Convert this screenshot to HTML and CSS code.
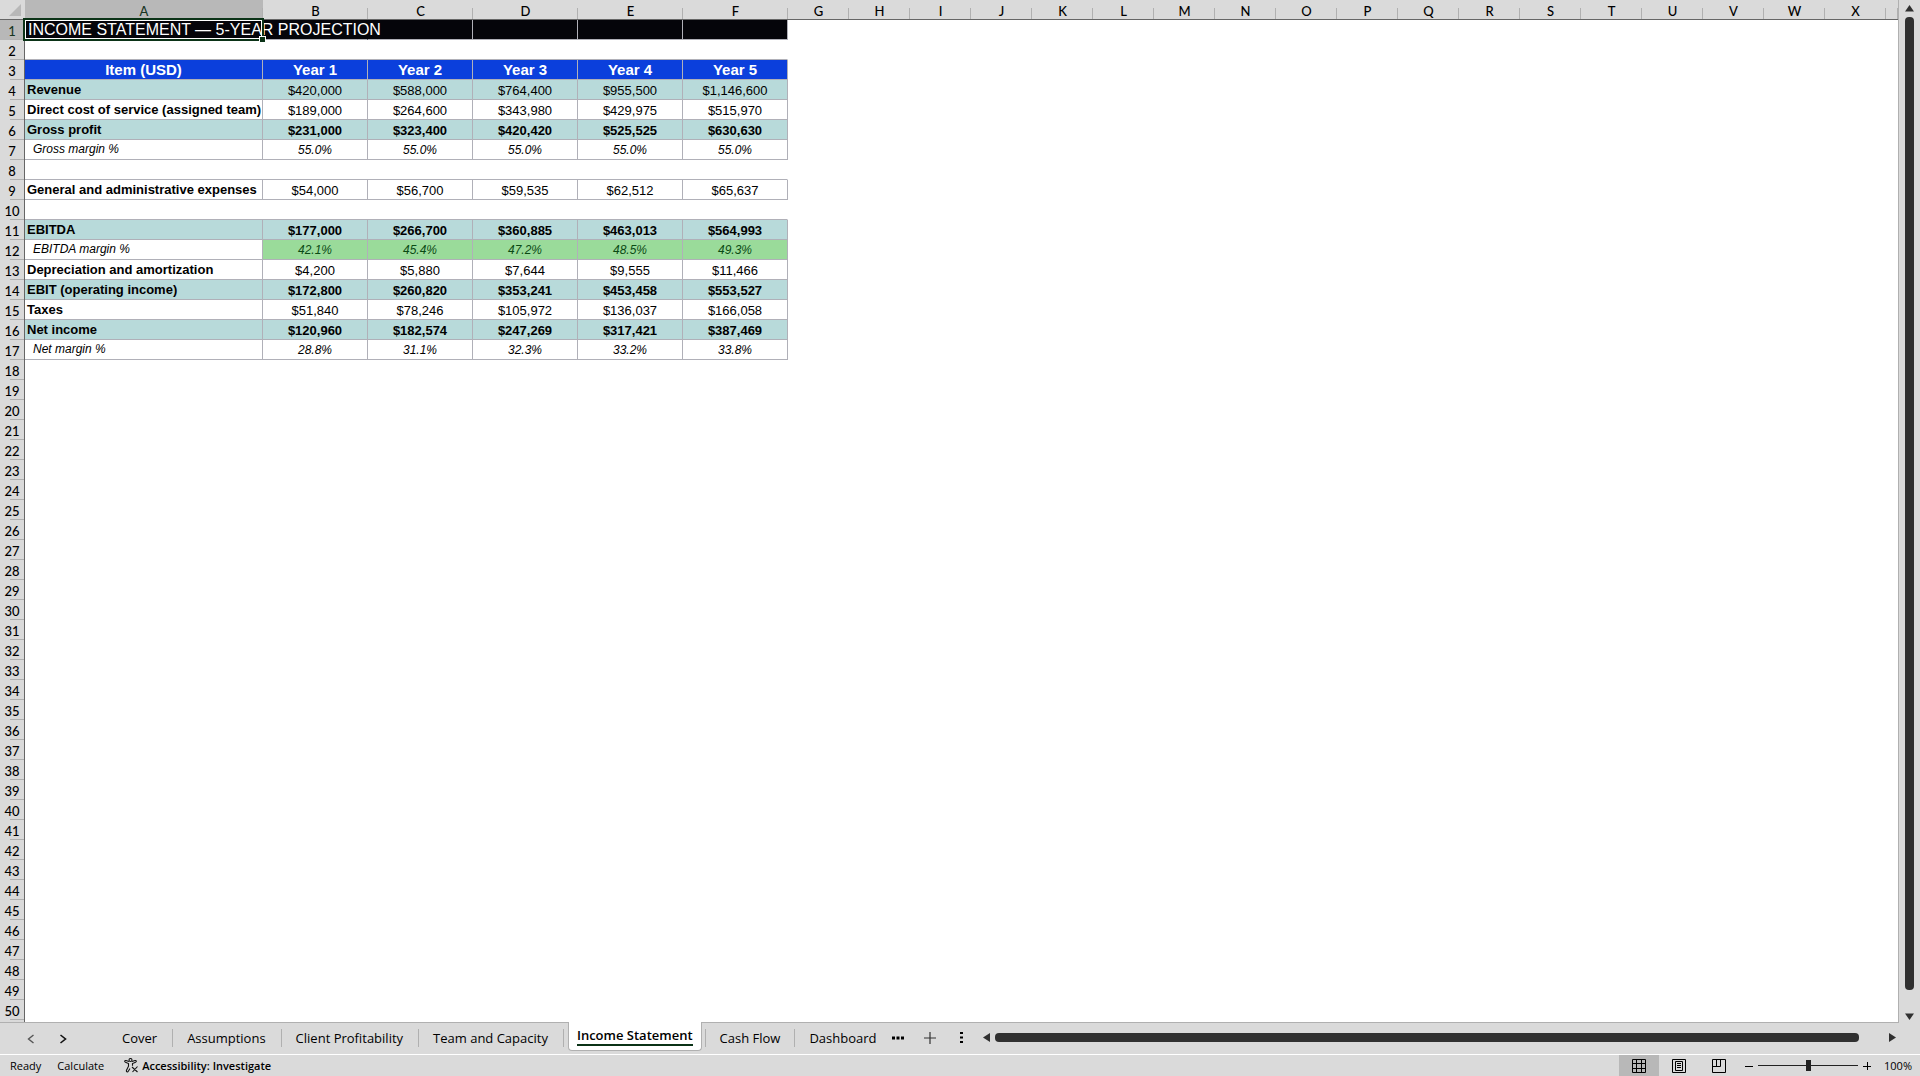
FILE: index.html
```
<!DOCTYPE html>
<html lang="en">
<head>
	<meta charset="UTF-8">
	<title>Income Statement</title>
	<link rel="stylesheet" href="styles.css">
</head>
<body>
	<main class="workspace">
		<div class="sheet">
			<table class="grid">
				<colgroup>
					<col class="col-num">
					<col class="col-item">
					<col class="col-year" span="5">
					<col class="col-empty" span="18">
					<col>
				</colgroup>
				<thead>
					<tr id="letters">
						<th class="corner"><svg width="12" height="12" viewBox="0 0 12 12"><path d="M12 0v12H0z" fill="#b8b8b8"/></svg></th>
					</tr>
				</thead>
				<tbody id="rows">
					<tr class="title"><th class="active">1</th><td class="selected">INCOME STATEMENT — 5-YEAR PROJECTION</td><td class="open"></td><td></td><td></td><td></td><td></td></tr>
					<tr class="blank"><th>2</th><td colspan="6"></td></tr>
					<tr class="years"><th>3</th><td>Item (USD)</td><td>Year 1</td><td>Year 2</td><td>Year 3</td><td>Year 4</td><td>Year 5</td></tr>
					<tr class="shade"><th>4</th><td>Revenue</td><td>$420,000</td><td>$588,000</td><td>$764,400</td><td>$955,500</td><td>$1,146,600</td></tr>
					<tr><th>5</th><td>Direct cost of service (assigned team)</td><td>$189,000</td><td>$264,600</td><td>$343,980</td><td>$429,975</td><td>$515,970</td></tr>
					<tr class="shade total"><th>6</th><td>Gross profit</td><td>$231,000</td><td>$323,400</td><td>$420,420</td><td>$525,525</td><td>$630,630</td></tr>
					<tr class="margin"><th>7</th><td>Gross margin %</td><td>55.0%</td><td>55.0%</td><td>55.0%</td><td>55.0%</td><td>55.0%</td></tr>
					<tr class="blank"><th>8</th><td colspan="6"></td></tr>
					<tr><th>9</th><td>General and administrative expenses</td><td>$54,000</td><td>$56,700</td><td>$59,535</td><td>$62,512</td><td>$65,637</td></tr>
					<tr class="blank"><th>10</th><td colspan="6"></td></tr>
					<tr class="shade total"><th>11</th><td>EBITDA</td><td>$177,000</td><td>$266,700</td><td>$360,885</td><td>$463,013</td><td>$564,993</td></tr>
					<tr class="margin good"><th>12</th><td>EBITDA margin %</td><td>42.1%</td><td>45.4%</td><td>47.2%</td><td>48.5%</td><td>49.3%</td></tr>
					<tr><th>13</th><td>Depreciation and amortization</td><td>$4,200</td><td>$5,880</td><td>$7,644</td><td>$9,555</td><td>$11,466</td></tr>
					<tr class="shade total"><th>14</th><td>EBIT (operating income)</td><td>$172,800</td><td>$260,820</td><td>$353,241</td><td>$453,458</td><td>$553,527</td></tr>
					<tr><th>15</th><td>Taxes</td><td>$51,840</td><td>$78,246</td><td>$105,972</td><td>$136,037</td><td>$166,058</td></tr>
					<tr class="shade total"><th>16</th><td>Net income</td><td>$120,960</td><td>$182,574</td><td>$247,269</td><td>$317,421</td><td>$387,469</td></tr>
					<tr class="margin"><th>17</th><td>Net margin %</td><td>28.8%</td><td>31.1%</td><td>32.3%</td><td>33.2%</td><td>33.8%</td></tr>
				</tbody>
			</table>
		</div>
		<div class="vscroll">
			<button aria-label="Scroll up"><svg width="9" height="7" viewBox="0 0 9 7"><path d="M4.500 0L9 6.500H0z"/></svg></button>
			<div class="thumb"></div>
			<button aria-label="Scroll down"><svg width="9" height="7" viewBox="0 0 9 7"><path d="M0 .5h9L4.500 7z"/></svg></button>
		</div>
	</main>

	<nav class="tabs">
		<button class="arrow" aria-label="Previous sheet"><svg width="8" height="10" viewBox="0 0 8 10"><path d="M6.500 1L1.500 5l5 4" fill="none" stroke="#555" stroke-width="1.400"/></svg></button>
		<button class="arrow" aria-label="Next sheet"><svg width="8" height="10" viewBox="0 0 8 10"><path d="M1.500 1l5 4-5 4" fill="none" stroke="#111" stroke-width="1.600"/></svg></button>
		<div class="tab-list">
			<button class="tab">Cover</button>
			<button class="tab">Assumptions</button>
			<button class="tab">Client Profitability</button>
			<button class="tab">Team and Capacity</button>
			<button class="tab current"><span>Income Statement</span></button>
			<button class="tab after">Cash Flow</button>
			<button class="tab last">Dashboard</button>
		</div>
		<div class="tab-tools">
			<button aria-label="More sheets"><svg width="12" height="4" viewBox="0 0 12 4"><path d="M0 .5h3v3H0zM4.500 .5h3v3h-3zM9 .5h3v3H9z"/></svg></button>
			<button aria-label="New sheet"><svg width="12" height="12" viewBox="0 0 12 12"><path d="M6 0v12M0 6h12" stroke="#333" stroke-width="1.200"/></svg></button>
			<button class="grip" aria-label="Resize tabs"><svg width="3" height="11" viewBox="0 0 3 11"><path d="M0 0h3v2H0zM0 4.500h3v2H0zM0 9h3v2H0z"/></svg></button>
		</div>
		<div class="hscroll">
			<button aria-label="Scroll left"><svg width="7" height="9" viewBox="0 0 7 9"><path d="M0 4.500L7 0v9z"/></svg></button>
			<div class="thumb"></div>
			<button aria-label="Scroll right"><svg width="7" height="9" viewBox="0 0 7 9"><path d="M7 4.500L0 0v9z"/></svg></button>
		</div>
	</nav>

	<footer class="status">
		<span class="state">Ready</span>
		<span class="state">Calculate</span>
		<button class="access">
			<svg width="15" height="15" viewBox="0 0 15 15" fill="none" stroke="#111" stroke-width="1.100"><circle cx="6.500" cy="2" r="1.500"/><path d="M5 3.500L2 2.500C.5 2.200.2 3.700 1.500 4.300l3 1.200v2.700l-2 4c-.5 1.500 1 2.200 1.800 1L6 10.500M8 3.500l3-1c1.500-.3 1.800 1.200.5 1.800l-3 1.200v2.300M8 9l5.500 5M13.500 8.500L8.500 14"/></svg>
			Accessibility: Investigate
		</button>
		<div class="views">
			<button class="on" aria-label="Normal"><svg width="14" height="14" viewBox="0 0 14 14"><path d="M.5.5h13v13H.5zM4.500 .5v13M9.500 .5v13M.5 4.500h13M.5 9.500h13"/></svg></button>
			<button aria-label="Page layout"><svg width="14" height="14" viewBox="0 0 14 14"><path d="M.5.5h13v13H.5zM3.500 2.500h7v9h-7zM5 4.500h4M5 6.500h4M5 8.500h4"/></svg></button>
			<button aria-label="Page break preview"><svg width="14" height="14" viewBox="0 0 14 14"><path d="M.5.5h13v13H.5zM.5 7.500h8v-7M4.500 .5v7"/></svg></button>
		</div>
		<div class="zoom">
			<button aria-label="Zoom out"><svg width="8" height="8" viewBox="0 0 8 8"><path d="M0 4.500h8"/></svg></button>
			<input type="range" min="10" max="190" value="100" aria-label="Zoom">
			<button aria-label="Zoom in"><svg width="8" height="8" viewBox="0 0 8 8"><path d="M0 4.500h8M4.500 0v8"/></svg></button>
			<span>100%</span>
		</div>
	</footer>

	<script>
		var letters = document.getElementById('letters');
		var rows = document.getElementById('rows');

		// column letters A to X
		for(var i = 0; i < 24; i++){
			var th = document.createElement('th');
			th.textContent = String.fromCharCode(65 + i);
			if(i == 0){
				th.className = 'active';
			}
			letters.appendChild(th);
		}
		letters.appendChild(document.createElement('th'));

		// empty rows under the statement
		for(var n = 18; n <= 51; n++){
			var tr = document.createElement('tr');
			tr.innerHTML = '<th>' + (n <= 50 ? n : '') + '</th>';
			rows.appendChild(tr);
		}
	</script>
</body>
</html>
```
FILE: styles.css
```
*{
	box-sizing: border-box;
}

body{
	display: flex;
	flex-direction: column;
	height: 100vh;
	margin: 0;
	overflow: hidden;
	background-color: #dadada;
	color: #000;
	font-family: "Open Sans", "Noto Sans", sans-serif;
	font-size: 11px;
}

button{
	display: flex;
	align-items: center;
	justify-content: center;
	padding: 0;
	border: 0;
	background: none;
	color: inherit;
	font: inherit;
}

.workspace{
	display: flex;
	flex: 1;
	min-height: 0;
}

.sheet{
	flex: 1;
	overflow: hidden;
	background-color: #fff;
	border-right: 1px solid #b0b0b0;
	border-bottom: 1px solid #b0b0b0;
}

/* grid */
.grid{
	width: 100%;
	table-layout: fixed;
	border-collapse: separate;
	border-spacing: 0;
}

.col-num{
	width: 25px;
}

.col-item{
	width: 238px;
}

.col-year{
	width: 105px;
}

.col-empty{
	width: 61px;
}

.grid th{
	height: 20px;
	padding: 2px 0 0;
	background: linear-gradient(#b0b0b0, #b0b0b0) right bottom / 14px 1px no-repeat #dadada;
	border-right: 1px solid #666;
	font-family: Lato, "Open Sans", sans-serif;
	font-size: 13px;
	font-weight: 500;
	line-height: 18px;
	text-align: center;
}

.grid thead th{
	padding: 3px 0 0;
	background: linear-gradient(#b0b0b0, #b0b0b0) right bottom / 1px 11px no-repeat #dadada;
	border-right: 0;
	border-bottom: 1px solid #666;
	line-height: 16px;
}

.grid thead .corner{
	padding: 0 4px 0 0;
	background: #dadada;
	text-align: right;
}

.corner svg{
	display: block;
	margin-left: auto;
}

.grid th.active{
	background-color: #b8b8b8;
	color: #17351f;
}

.grid td{
	height: 20px;
	padding: 2px 1px 0;
	overflow: hidden;
	border-right: 1px solid #b0b0b8;
	border-bottom: 1px solid #b0b0b8;
	color: #000;
	font-family: "Liberation Sans", Arial, sans-serif;
	font-size: 13px;
	line-height: 17px;
	text-align: center;
	white-space: nowrap;
}

.grid td:nth-child(2){
	padding: 0 0 0 2px;
	font-weight: 700;
	line-height: 19px;
	text-align: left;
}

.grid .blank td{
	border-right-color: transparent;
}

.grid .title td{
	background-color: #05050a;
	color: #fff;
	font-size: 16px;
	font-weight: 400;
}

.grid .title .open{
	border-right-color: #05050a;
}

.grid .title .selected{
	position: relative;
	z-index: 1;
	padding-left: 3px;
	overflow: visible;
	border-right-color: #05050a;
}

.selected::before{
	content: "";
	position: absolute;
	inset: -2px;
	border: 2px solid #0b3317;
	box-shadow: inset 0 0 0 1px #fff;
}

.selected::after{
	content: "";
	position: absolute;
	right: -3px;
	bottom: -3px;
	width: 5px;
	height: 5px;
	background-color: #0b3317;
	outline: 1px solid #fff;
}

.grid .years td{
	padding: 0;
	background-color: #0b3fdc;
	color: #fff;
	font-size: 15px;
	font-weight: 700;
	line-height: 19px;
	text-align: center;
}

.grid .shade td{
	background-color: #b8dada;
}

.grid .total td{
	font-weight: 700;
}

.grid .margin td{
	font-size: 12px;
	font-style: italic;
}

.grid .margin td:nth-child(2){
	padding-left: 8px;
	font-weight: 400;
}

.grid .good td:nth-child(n+3){
	background-color: #9adb9a;
	color: #0a4a14;
}

/* scroll bars */
.vscroll{
	display: flex;
	flex-direction: column;
	align-items: center;
	gap: 5px;
	width: 21px;
	padding: 5px 0 3px;
}

.vscroll svg, .hscroll svg{
	display: block;
	fill: #303030;
}

.thumb{
	flex: 1;
	background-color: #303030;
	border-radius: 4px;
}

.vscroll .thumb{
	width: 9px;
	margin-bottom: 18px;
}

.hscroll{
	display: flex;
	flex: 1;
	align-items: center;
	gap: 5px;
	padding: 0 24px 2px 20px;
}

.hscroll .thumb{
	height: 9px;
	margin-right: 25px;
}

/* sheet tabs */
.tabs{
	display: flex;
	height: 32px;
	padding-left: 15px;
	border-bottom: 1px solid #fff;
}

.arrow{
	width: 32px;
}

.tab-list{
	display: flex;
	align-items: center;
	margin-left: 29px;
	padding-bottom: 2px;
}

.tab{
	height: 18px;
	padding: 0 15px 0 14px;
	border-right: 1px solid #b0b0b0;
	font-size: 13px;
	line-height: 18px;
}

.tab.current{
	align-self: flex-start;
	height: 29px;
	margin: -1px 3px 0 4px;
	padding: 0 8px;
	background-color: #fff;
	border: 1px solid #b0b0b0;
	border-top: 0;
	border-radius: 0 0 4px 4px;
	font-weight: 600;
}

.current span{
	border-bottom: 2px solid #0b3317;
}

.tab.after{
	padding: 0 14px;
	border-left: 1px solid #b0b0b0;
}

.tab.last{
	border-right: 0;
}

.tab-tools{
	display: flex;
	gap: 20px;
	padding-bottom: 2px;
}

.grip{
	margin-left: 4px;
}

/* status bar */
.status{
	display: flex;
	align-items: center;
	gap: 6px;
	height: 21px;
	padding: 0 8px 0 10px;
}

.state{
	margin-right: 10px;
}

.access{
	gap: 3px;
	margin-left: 4px;
	font-weight: 600;
}

.views{
	display: flex;
	align-self: stretch;
	margin-left: auto;
}

.views button{
	width: 40px;
}

.views .on{
	background-color: #b8b8b8;
}

.views svg, .zoom svg{
	fill: none;
	stroke: #000;
	stroke-width: 1;
}

.zoom{
	display: flex;
	align-items: center;
	gap: 5px;
}

.zoom input{
	width: 100px;
	height: 11px;
	margin: 0;
	appearance: none;
	background: linear-gradient(#222, #222) center / 100% 1px no-repeat;
}

.zoom input::-webkit-slider-thumb{
	appearance: none;
	width: 5px;
	height: 11px;
	background-color: #222;
}

.zoom span{
	margin-left: 8px;
}
```
